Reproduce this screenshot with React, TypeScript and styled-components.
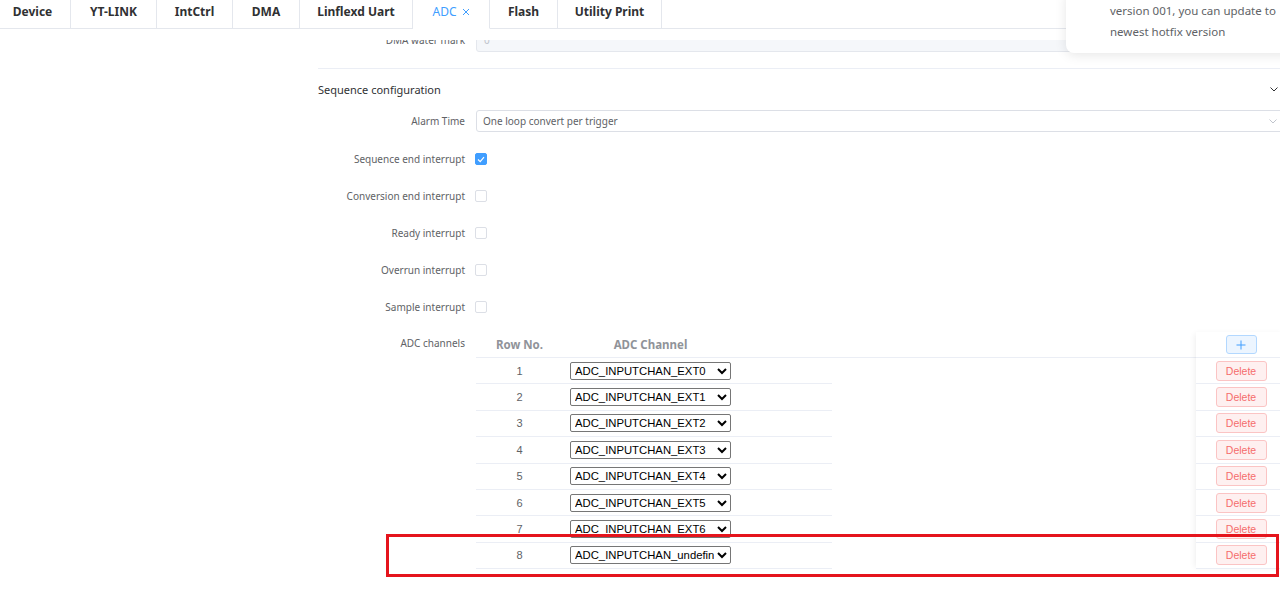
import React from "react";
import styled, { createGlobalStyle } from "styled-components";

const GlobalStyle = createGlobalStyle`
  html, body { margin: 0; padding: 0; background: #fff; overflow: hidden; }
  body { font-family: "Noto Sans", "Liberation Sans", sans-serif; }
  * { box-sizing: border-box; }
`;

const Page = styled.div`
  position: relative;
  width: 1280px;
  height: 612px;
  overflow: hidden;
  background: #fff;
`;

const Header = styled.div`
  height: 40px;
  background: #fff;
`;

const TabBar = styled.div`
  display: flex;
  height: 29px;
  margin-left: -5px;
`;

const Tab = styled.div<{ $w: number; $active?: boolean }>`
  flex: none;
  width: ${(p) => p.$w}px;
  height: 29px;
  display: flex;
  align-items: center;
  justify-content: center;
  gap: 5px;
  padding-bottom: 5px;
  border-right: 1px solid #e4e7ed;
  border-bottom: 1px solid ${(p) => (p.$active ? "#fff" : "#e4e7ed")};
  font-size: 12px;
  font-weight: ${(p) => (p.$active ? 400 : 700)};
  color: ${(p) => (p.$active ? "#409eff" : "#303133")};
  white-space: nowrap;
`;

const TabFiller = styled.div`
  flex: 1;
  border-bottom: 1px solid #e4e7ed;
`;

const Body = styled.div`
  display: flex;
  height: 572px;
  overflow: hidden;
`;

const Sidebar = styled.div`
  flex: none;
  width: 300px;
`;

const Main = styled.div`
  flex: none;
  width: 986px;
  padding-left: 18px;
`;

const FormRow = styled.div<{ $top?: boolean }>`
  display: flex;
  align-items: ${(p) => (p.$top ? "flex-start" : "center")};
  min-height: 22px;
  margin-bottom: 15px;
`;

const DmaRow = styled.div`
  display: flex;
  align-items: center;
  height: 24px;
  margin-top: -12px;
`;

const Label = styled.div`
  flex: none;
  width: 158px;
  padding-right: 11px;
  text-align: right;
  font-size: 10px;
  line-height: 22px;
  color: #606266;
  white-space: nowrap;
`;

const DisabledInput = styled.div`
  flex: 1;
  height: 24px;
  border: 1px solid #e4e7ed;
  border-radius: 3px;
  background: #f5f7fa;
  padding-left: 7px;
  font-size: 10px;
  line-height: 22px;
  color: #c0c4cc;
`;

const Divider = styled.div`
  margin-top: 16px;
  height: 1px;
  background: #ebeef5;
`;

const CollapseHeader = styled.div`
  height: 41px;
  display: flex;
  align-items: center;
  justify-content: space-between;
  padding-right: 8px;
  padding-bottom: 1px;
  font-size: 11px;
  color: #303133;
`;

const SelectBox = styled.div`
  flex: 1;
  height: 22px;
  border: 1px solid #dcdfe6;
  border-radius: 3px;
  display: flex;
  align-items: center;
  justify-content: space-between;
  padding: 0 8px 0 6px;
  font-size: 10px;
  color: #606266;
`;

const CheckRow = styled(FormRow)`
  padding-top: 1px;
  margin-bottom: 14px;
`;

const CheckBox = styled.span<{ $checked?: boolean }>`
  display: inline-flex;
  align-items: center;
  justify-content: center;
  width: 12px;
  height: 12px;
  margin-left: -1px;
  border-radius: 2px;
  border: 1px solid ${(p) => (p.$checked ? "#409eff" : "#dcdfe6")};
  background: ${(p) => (p.$checked ? "#409eff" : "#fff")};
`;

const Table = styled.div`
  flex: 1;
  display: flex;
`;

const TableMain = styled.div`
  flex: 1;
`;

const HeadRow = styled.div`
  display: grid;
  grid-template-columns: 87px 175px 94px;
  height: 26px;
  align-items: center;
  border-bottom: 1px solid #ebeef5;
`;

const HeadCell = styled.div`
  text-align: center;
  font-size: 11.5px;
  font-weight: 700;
  color: #909399;
  white-space: nowrap;
`;

const BodyRow = styled.div`
  display: grid;
  grid-template-columns: 87px 175px 94px;
  width: 356px;
  height: 26.4px;
  align-items: center;
  border-bottom: 1px solid #ebeef5;
`;

const NumCell = styled.div`
  text-align: center;
  font-family: "Liberation Sans", Arial, sans-serif;
  font-size: 11px;
  color: #606266;
`;

const ChannelCell = styled.div`
  display: flex;
  justify-content: center;
`;

const NativeSelect = styled.select`
  width: 161px;
  height: 18px;
  font-family: "Liberation Sans", Arial, sans-serif;
  font-size: 11.3px;
  color: #000;
  background: #fff;
  border: 1px solid #767676;
  border-radius: 2px;
  padding: 0;
`;

const FixedCol = styled.div`
  flex: none;
  width: 90px;
  background: #fff;
  box-shadow: -3px 0 6px -2px rgba(0, 0, 0, 0.07);
`;

const FixedHead = styled.div`
  height: 26px;
  display: flex;
  align-items: center;
  justify-content: center;
  border-bottom: 1px solid #ebeef5;
`;

const FixedRow = styled.div`
  height: 26.4px;
  display: flex;
  align-items: center;
  justify-content: center;
  border-bottom: 1px solid #ebeef5;
`;

const AddButton = styled.button`
  width: 31px;
  height: 19px;
  padding: 0;
  display: flex;
  align-items: center;
  justify-content: center;
  border: 1px solid #b3d8ff;
  background: #ecf5ff;
  border-radius: 3px;
`;

const DeleteButton = styled.button`
  width: 51px;
  height: 20px;
  padding: 0;
  border: 1px solid #fbc4c4;
  background: #fef0f0;
  color: #f56c6c;
  border-radius: 3px;
  font-family: "Liberation Sans", Arial, sans-serif;
  font-size: 10.5px;
`;

const Toast = styled.div`
  position: absolute;
  left: 1066px;
  top: -10px;
  width: 240px;
  padding: 10px 14px 11px 44px;
  background: #fff;
  border-radius: 8px;
  box-shadow: 0 2px 12px rgba(0, 0, 0, 0.1);
  font-size: 11.5px;
  line-height: 21px;
  color: #606266;
`;

const ToastText = styled.div`
  width: 172px;
`;

const Annotation = styled.div`
  position: absolute;
  left: 386px;
  top: 534px;
  width: 893px;
  height: 43px;
  border: 3px solid #e5141c;
  pointer-events: none;
`;

const Chevron = ({ color }: { color: string }) => (
  <svg width="8" height="5" viewBox="0 0 8 5">
    <polyline points="0.5,0.5 4,4 7.5,0.5" fill="none" stroke={color} strokeWidth="1" />
  </svg>
);

const tabs: { name: string; w: number; active?: boolean }[] = [
  { name: "Device", w: 76 },
  { name: "YT-LINK", w: 86 },
  { name: "IntCtrl", w: 76 },
  { name: "DMA", w: 67 },
  { name: "Linflexd Uart", w: 113 },
  { name: "ADC", w: 77, active: true },
  { name: "Flash", w: 68 },
  { name: "Utility Print", w: 104 },
];

const interrupts: { label: string; checked?: boolean }[] = [
  { label: "Sequence end interrupt", checked: true },
  { label: "Conversion end interrupt" },
  { label: "Ready interrupt" },
  { label: "Overrun interrupt" },
  { label: "Sample interrupt" },
];

const channels = [
  "ADC_INPUTCHAN_EXT0",
  "ADC_INPUTCHAN_EXT1",
  "ADC_INPUTCHAN_EXT2",
  "ADC_INPUTCHAN_EXT3",
  "ADC_INPUTCHAN_EXT4",
  "ADC_INPUTCHAN_EXT5",
  "ADC_INPUTCHAN_EXT6",
  "ADC_INPUTCHAN_undefined",
];

export default function App() {
  return (
    <Page>
      <GlobalStyle />
      <Header>
        <TabBar>
          {tabs.map((t) => (
            <Tab key={t.name} $w={t.w} $active={t.active}>
              {t.name}
              {t.active && (
                <svg width="8" height="8" viewBox="0 0 8 8">
                  <path d="M1 1 L7 7 M7 1 L1 7" stroke="#409eff" strokeWidth="1" />
                </svg>
              )}
            </Tab>
          ))}
          <TabFiller />
        </TabBar>
      </Header>
      <Body>
        <Sidebar />
        <Main>
          <DmaRow>
            <Label>DMA water mark</Label>
            <DisabledInput>0</DisabledInput>
          </DmaRow>
          <Divider />
          <CollapseHeader>
            <span>Sequence configuration</span>
            <Chevron color="#303133" />
          </CollapseHeader>
          <FormRow>
            <Label>Alarm Time</Label>
            <SelectBox>
              <span>One loop convert per trigger</span>
              <Chevron color="#c0c4cc" />
            </SelectBox>
          </FormRow>
          {interrupts.map((it) => (
            <CheckRow key={it.label}>
              <Label>{it.label}</Label>
              <CheckBox $checked={it.checked}>
                {it.checked && (
                  <svg width="8" height="7" viewBox="0 0 8 7">
                    <polyline points="1,3.5 3.2,5.6 7,1.2" fill="none" stroke="#fff" strokeWidth="1.2" />
                  </svg>
                )}
              </CheckBox>
            </CheckRow>
          ))}
          <FormRow $top>
            <Label>ADC channels</Label>
            <Table>
              <TableMain>
                <HeadRow>
                  <HeadCell>Row No.</HeadCell>
                  <HeadCell>ADC Channel</HeadCell>
                  <HeadCell />
                </HeadRow>
                {channels.map((c, i) => (
                  <BodyRow key={i}>
                    <NumCell>{i + 1}</NumCell>
                    <ChannelCell>
                      <NativeSelect defaultValue={c}>
                        <option value={c}>{c}</option>
                      </NativeSelect>
                    </ChannelCell>
                    <div />
                  </BodyRow>
                ))}
              </TableMain>
              <FixedCol>
                <FixedHead>
                  <AddButton>
                    <svg width="10" height="10" viewBox="0 0 10 10">
                      <path d="M5 0.5 V9.5 M0.5 5 H9.5" stroke="#409eff" strokeWidth="1" />
                    </svg>
                  </AddButton>
                </FixedHead>
                {channels.map((c, i) => (
                  <FixedRow key={i}>
                    <DeleteButton>Delete</DeleteButton>
                  </FixedRow>
                ))}
              </FixedCol>
            </Table>
          </FormRow>
        </Main>
      </Body>
      <Toast>
        <ToastText>version 001, you can update to newest hotfix version</ToastText>
      </Toast>
      <Annotation />
    </Page>
  );
}
